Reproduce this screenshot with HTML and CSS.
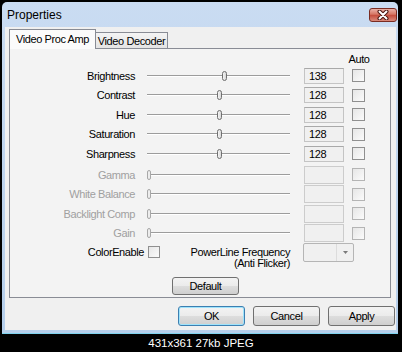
FILE: index.html
```html
<!DOCTYPE html>
<html lang="en">
<head>
    <meta charset="UTF-8">
    <meta name="viewport" content="width=device-width, initial-scale=1.0">
    <title>Properties</title>
    <link rel="stylesheet" href="styles.css">
</head>
<body>
    <div class="window">
        <!-- Title bar -->
        <div class="title-bar">
            <span class="title">Properties</span>
            <button class="close-btn" aria-label="Close">
                <svg width="14" height="10" viewBox="0 0 14 10">
                    <path d="M3.5 1.5 L10.5 8.5 M10.5 1.5 L3.5 8.5" stroke="#4a1510" stroke-width="4" stroke-linecap="round"/>
                    <path d="M3.5 1.5 L10.5 8.5 M10.5 1.5 L3.5 8.5" stroke="#fff" stroke-width="2" stroke-linecap="round"/>
                </svg>
            </button>
        </div>

        <div class="dialog">
            <!-- Tabs -->
            <div class="tabs">
                <div class="tab active">Video Proc Amp</div>
                <div class="tab">Video Decoder</div>
            </div>

            <div class="panel">
                <div class="auto-head">Auto</div>

                <div class="row">
                    <span class="name">Brightness</span>
                    <div class="slider"><span class="thumb" style="left: 75px"></span></div>
                    <div class="value">138</div>
                    <span class="check"></span>
                </div>
                <div class="row">
                    <span class="name">Contrast</span>
                    <div class="slider"><span class="thumb" style="left: 70px"></span></div>
                    <div class="value">128</div>
                    <span class="check"></span>
                </div>
                <div class="row">
                    <span class="name">Hue</span>
                    <div class="slider"><span class="thumb" style="left: 70px"></span></div>
                    <div class="value">128</div>
                    <span class="check"></span>
                </div>
                <div class="row">
                    <span class="name">Saturation</span>
                    <div class="slider"><span class="thumb" style="left: 70px"></span></div>
                    <div class="value">128</div>
                    <span class="check"></span>
                </div>
                <div class="row">
                    <span class="name">Sharpness</span>
                    <div class="slider"><span class="thumb" style="left: 70px"></span></div>
                    <div class="value">128</div>
                    <span class="check"></span>
                </div>

                <!-- Controls the device does not support -->
                <div class="row off first-off">
                    <span class="name">Gamma</span>
                    <div class="slider"><span class="thumb"></span></div>
                    <div class="value"></div>
                    <span class="check"></span>
                </div>
                <div class="row off">
                    <span class="name">White Balance</span>
                    <div class="slider"><span class="thumb"></span></div>
                    <div class="value"></div>
                    <span class="check"></span>
                </div>
                <div class="row off">
                    <span class="name">Backlight Comp</span>
                    <div class="slider"><span class="thumb"></span></div>
                    <div class="value"></div>
                    <span class="check"></span>
                </div>
                <div class="row off">
                    <span class="name">Gain</span>
                    <div class="slider"><span class="thumb"></span></div>
                    <div class="value"></div>
                    <span class="check"></span>
                </div>

                <div class="extras">
                    <div class="color-enable">
                        <span>ColorEnable</span>
                        <span class="check"></span>
                    </div>
                    <div class="power-text">PowerLine Frequency<br>(Anti Flicker)</div>
                    <div class="combo">
                        <span class="combo-arrow">
                            <svg width="5" height="3" viewBox="0 0 5 3"><path d="M0 0 H5 L2.5 3 Z" fill="#7a7a7a"/></svg>
                        </span>
                    </div>
                </div>

                <button class="btn default-btn">Default</button>
            </div>

            <div class="actions">
                <button class="btn primary">OK</button>
                <button class="btn">Cancel</button>
                <button class="btn">Apply</button>
            </div>
        </div>
    </div>

    <div class="caption">431x361 27kb JPEG</div>
</body>
</html>
```

FILE: styles.css
```css
* {
    box-sizing: border-box;
}

body {
    margin: 0;
    width: 402px;
    height: 352px;
    padding: 2px 4px 0 2px;
    background: #000;
    font-family: "Liberation Sans", Arial, sans-serif;
    font-size: 11px;
    letter-spacing: -0.4px;
    color: #000;
    overflow: hidden;
}

.window {
    background: linear-gradient(to bottom, #cadcf2, #bed4ee 50%, #b6cfeb);
    border-radius: 5px 5px 0 0;
    padding-bottom: 4px;
    box-shadow: inset 0 -1px #7fd3ee;
}

.title-bar {
    height: 25px;
    display: flex;
    align-items: center;
    justify-content: space-between;
    padding: 0 1px 0 5px;
}

.title {
    font-size: 12px;
    letter-spacing: 0;
}

.close-btn {
    width: 28px;
    height: 14px;
    padding: 0;
    border: 1px solid #7a2c22;
    border-radius: 3px;
    background: linear-gradient(#eab0a6, #d67563 45%, #c44b3a 50%, #d98a7b);
    display: flex;
    align-items: center;
    justify-content: center;
}

.dialog {
    margin: 0 2px 0 3px;
    background: #f0f0f0;
    padding: 2px 1px 4px 4px;
}

/* Tabs */
.tabs {
    display: flex;
    align-items: flex-end;
}

.tab {
    height: 16px;
    width: 73px;
    margin-left: -1px;
    border: 1px solid #898c95;
    border-bottom: none;
    background: linear-gradient(#f4f4f4, #e4e4e4);
    display: flex;
    align-items: center;
    justify-content: center;
}

.tab.active {
    width: 87px;
    height: 20px;
    margin-left: 0;
    margin-bottom: -1px;
    padding-bottom: 1px;
    background: #fbfbfb;
    position: relative;
    z-index: 1;
}

.panel {
    width: 382px;
    border: 1px solid #898c95;
    background: #f3f3f3;
    padding: 3px 0 2px;
}

.auto-head {
    width: 24px;
    height: 14px;
    margin-left: 337px;
    text-align: center;
    line-height: 14px;
}

/* Control rows */
.row {
    display: flex;
    align-items: center;
    height: 19.5px;
}

.row.first-off {
    margin-top: 1.5px;
}

.name {
    width: 125px;
    text-align: right;
    white-space: nowrap;
}

.slider {
    position: relative;
    width: 143px;
    height: 12px;
    margin-left: 12px;
}

.slider::before {
    content: "";
    position: absolute;
    left: 0;
    right: 0;
    top: 5px;
    height: 1px;
    background: #9c9c9c;
    box-shadow: 0 1px #ffffff;
}

.thumb {
    position: absolute;
    top: 1px;
    width: 5px;
    height: 10px;
    border: 1px solid #6f6f6f;
    border-radius: 3px;
    background: linear-gradient(to right, #f4f4f4, #d8d8d8);
}

.value {
    width: 40px;
    height: 16px;
    margin-left: 14px;
    border: 1px solid #c4c4c4;
    border-top-color: #a9a9a9;
    background: #f0f0f0;
    padding-left: 4px;
    line-height: 14px;
}

.check {
    display: block;
    width: 13px;
    height: 13px;
    margin-left: 8px;
    border: 1px solid #8f8f8f;
    background: linear-gradient(135deg, #e6e6e6, #fbfbfb);
}

.row.off .name {
    color: #a0a0a0;
}

.row.off .slider::before {
    left: 4px;
}

.row.off .thumb {
    left: 0;
    width: 4px;
    border-color: #a8a8a8;
    background: #ededed;
}

.row.off .value {
    height: 18px;
    border-color: #cccccc;
}

.row.off .check {
    border-color: #b4b4b4;
}

/* Bottom of the panel */
.extras {
    display: flex;
    align-items: flex-start;
    height: 25.5px;
}

.color-enable {
    width: 150px;
    height: 14px;
    margin-top: 2px;
    display: flex;
    align-items: center;
    justify-content: flex-end;
}

.color-enable .check {
    width: 12px;
    height: 12px;
    margin-left: 4px;
}

.power-text {
    width: 130px;
    margin-top: 3.5px;
    line-height: 11px;
    text-align: right;
    white-space: nowrap;
}

.combo {
    width: 51px;
    height: 19px;
    margin-left: 13px;
    border: 1px solid #b5b5b5;
    border-radius: 2px;
    background: #f0f0f0;
    display: flex;
    justify-content: flex-end;
}

.combo-arrow {
    width: 17px;
    border-left: 1px solid #dcdcdc;
    display: flex;
    align-items: center;
    justify-content: center;
}

.btn {
    width: 67px;
    height: 20px;
    padding: 0;
    border: 1px solid #707070;
    border-radius: 3px;
    background: linear-gradient(#f3f3f3, #ebebeb 50%, #dddddd 51%, #cfcfcf);
    font-family: "Liberation Sans", Arial, sans-serif;
    font-size: 11px;
    letter-spacing: -0.4px;
    color: #000;
}

.default-btn {
    display: block;
    height: 18px;
    margin: 8.5px 0 0 162px;
}

.actions {
    display: flex;
    justify-content: flex-end;
    gap: 8px;
    margin-top: 8px;
}

.btn.primary {
    border-color: #3c7fb1;
    box-shadow: inset 0 0 0 1px #9fe3fb;
}

.caption {
    height: 18px;
    margin-left: -2px;
    margin-right: -4px;
    color: #fff;
    text-align: center;
    font-size: 11.5px;
    letter-spacing: 0;
    line-height: 18px;
}
```
